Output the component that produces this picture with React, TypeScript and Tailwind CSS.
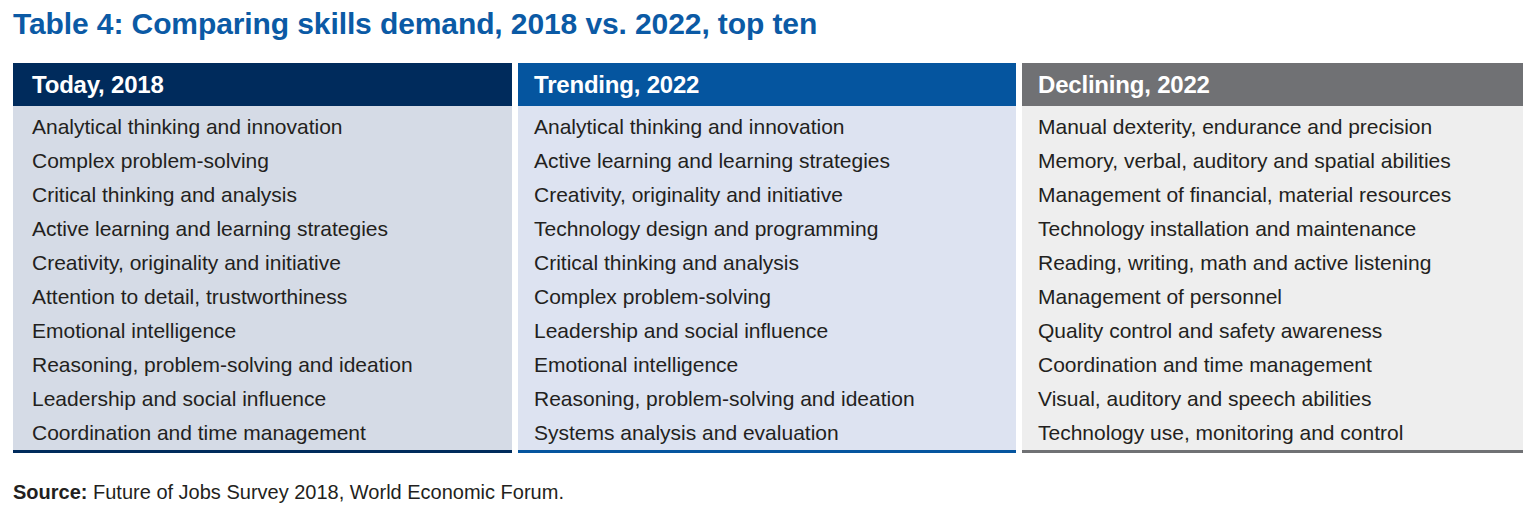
import React from 'react';

interface Column {
  title: string;
  head: string;
  edge: string;
  body: string;
  pad: string;
  items: string[];
}

const columns: Column[] = [
  {
    title: 'Today, 2018',
    head: 'bg-[#002b5c]',
    edge: 'border-[#002b5c]',
    body: 'bg-[#d5dbe6]',
    pad: 'pl-[19px]',
    items: [
      'Analytical thinking and innovation',
      'Complex problem-solving',
      'Critical thinking and analysis',
      'Active learning and learning strategies',
      'Creativity, originality and initiative',
      'Attention to detail, trustworthiness',
      'Emotional intelligence',
      'Reasoning, problem-solving and ideation',
      'Leadership and social influence',
      'Coordination and time management',
    ],
  },
  {
    title: 'Trending, 2022',
    head: 'bg-[#05559f]',
    edge: 'border-[#05559f]',
    body: 'bg-[#dde3f1]',
    pad: 'pl-[16px]',
    items: [
      'Analytical thinking and innovation',
      'Active learning and learning strategies',
      'Creativity, originality and initiative',
      'Technology design and programming',
      'Critical thinking and analysis',
      'Complex problem-solving',
      'Leadership and social influence',
      'Emotional intelligence',
      'Reasoning, problem-solving and ideation',
      'Systems analysis and evaluation',
    ],
  },
  {
    title: 'Declining, 2022',
    head: 'bg-[#707174]',
    edge: 'border-[#707174]',
    body: 'bg-[#eeeeee]',
    pad: 'pl-[16px]',
    items: [
      'Manual dexterity, endurance and precision',
      'Memory, verbal, auditory and spatial abilities',
      'Management of financial, material resources',
      'Technology installation and maintenance',
      'Reading, writing, math and active listening',
      'Management of personnel',
      'Quality control and safety awareness',
      'Coordination and time management',
      'Visual, auditory and speech abilities',
      'Technology use, monitoring and control',
    ],
  },
];

const SkillColumn: React.FC<{ col: Column }> = ({ col }) => (
  <div className={`flex flex-col border-b-[3px] ${col.edge}`}>
    <div className={`h-[43px] flex items-center text-white font-bold text-[24px] tracking-[-0.2px] ${col.head} ${col.pad}`}>
      {col.title}
    </div>
    <div className={`flex flex-col pt-[4px] ${col.body}`}>
      {col.items.map((item) => (
        <div key={item} className={`h-[34px] flex items-center text-[21px] text-[#231f20] ${col.pad}`}>
          {item}
        </div>
      ))}
    </div>
  </div>
);

export default function App() {
  return (
    <div className="w-[1536px] h-[516px] bg-white px-[13px] pt-[4px] font-['Liberation_Sans',Arial,sans-serif]">
      <h1 className="text-[30px] leading-[40px] font-bold text-[#0b5aa5] tracking-[-0.1px]">
        Table 4: Comparing skills demand, 2018 vs. 2022, top ten
      </h1>
      <div className="mt-[19px] grid grid-cols-[499px_498px_501px] gap-[6px]">
        {columns.map((col) => (
          <SkillColumn key={col.title} col={col} />
        ))}
      </div>
      <p className="mt-[26px] text-[20px] leading-[26px] text-[#231f20]">
        <span className="font-bold">Source:</span> Future of Jobs Survey 2018, World Economic Forum.
      </p>
    </div>
  );
}
